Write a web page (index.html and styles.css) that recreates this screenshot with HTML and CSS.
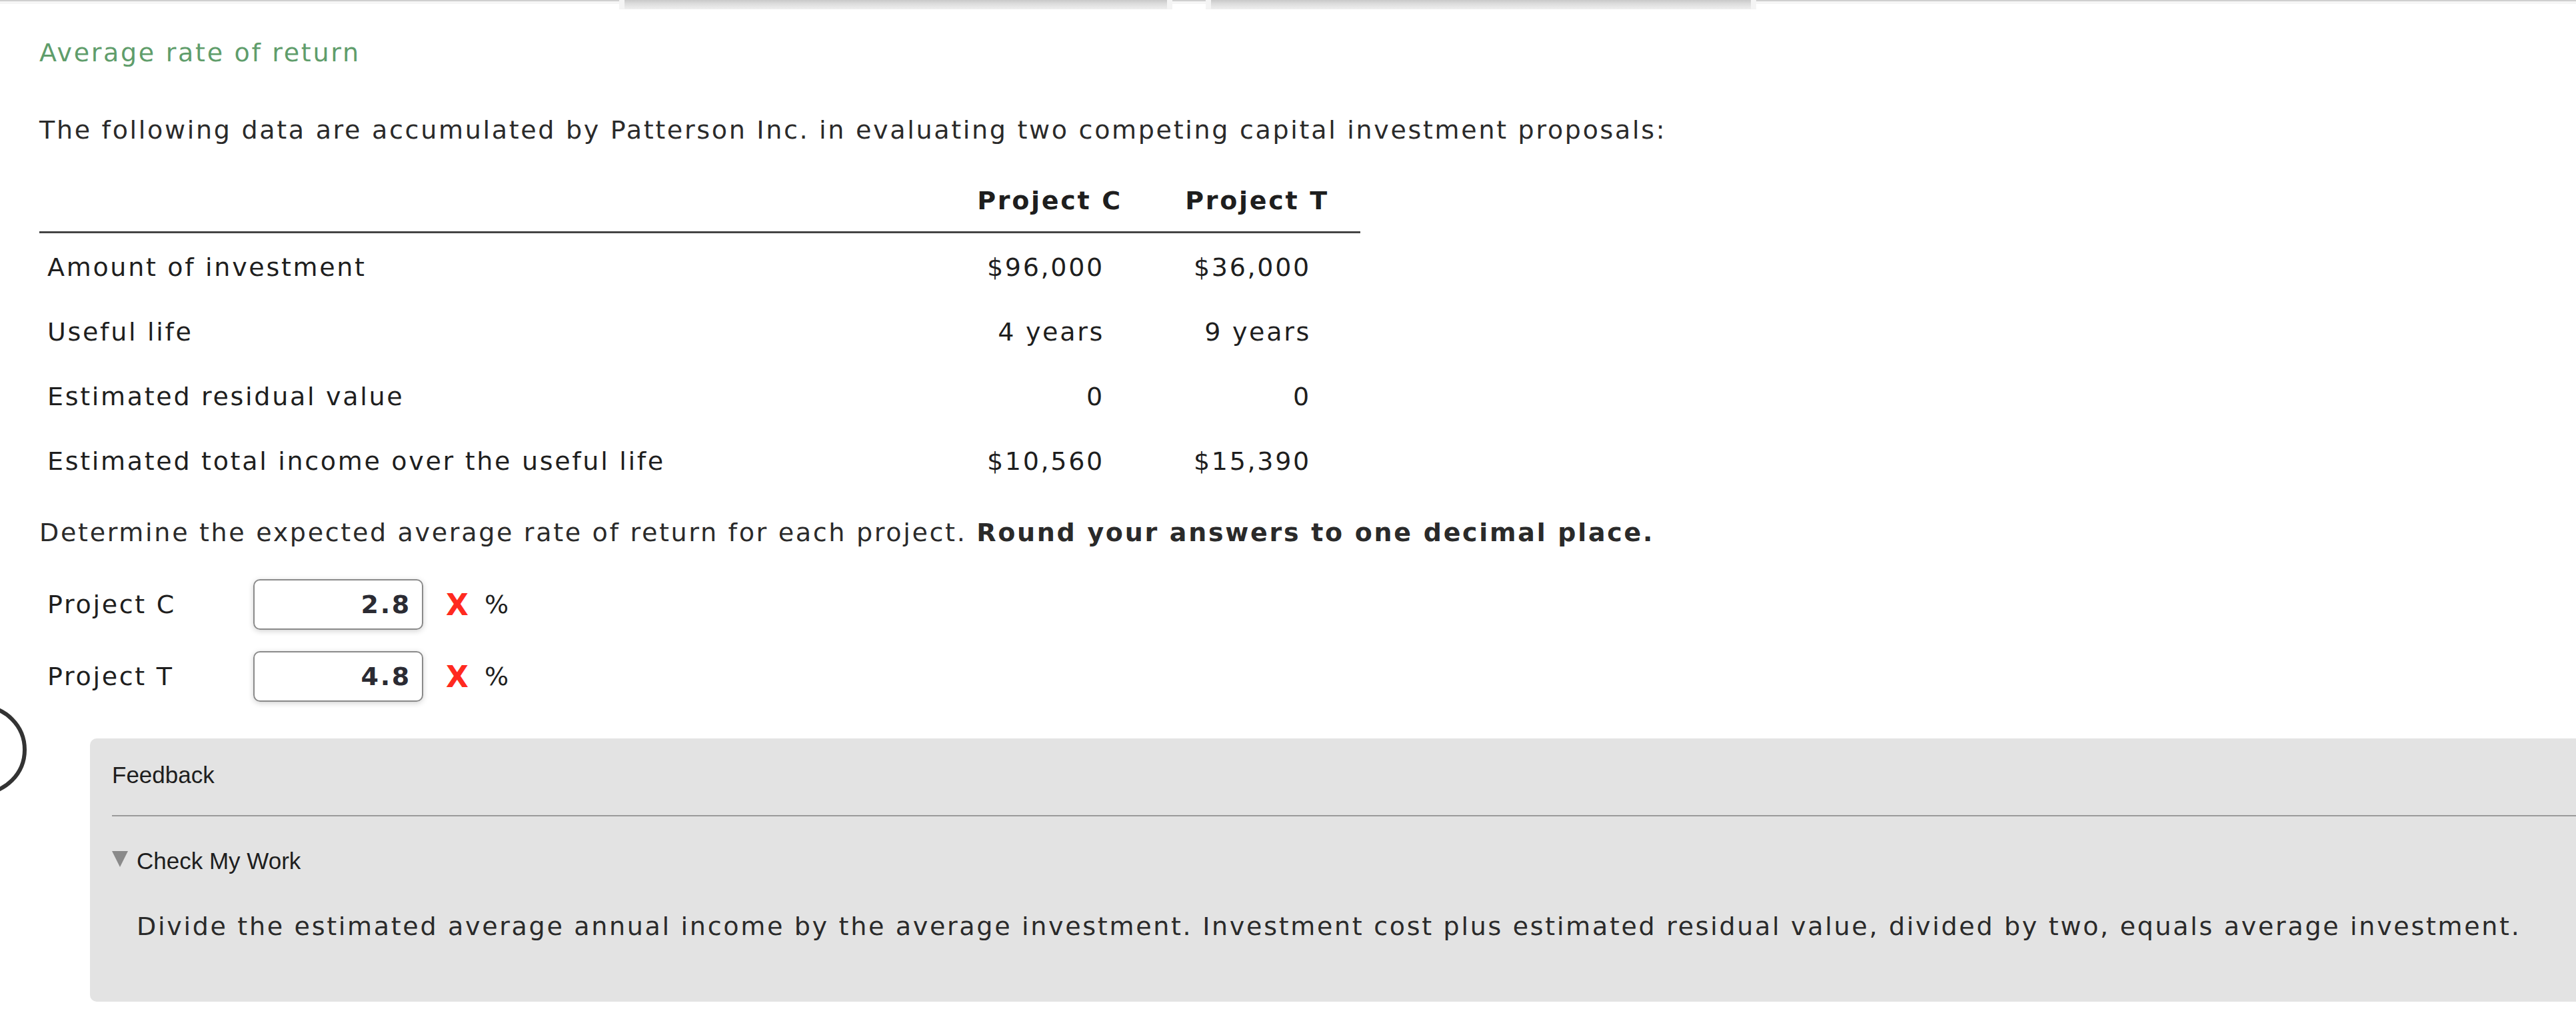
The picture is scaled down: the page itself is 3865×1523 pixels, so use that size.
FILE: index.html
```html
<!DOCTYPE html>
<html lang="en">
<head>
<meta charset="utf-8">
<title>Average rate of return</title>
<link rel="stylesheet" href="styles.css">
</head>
<body>
<div class="topbar">
  <div class="tab tab-one"></div>
  <div class="tab tab-two"></div>
</div>
<div class="side-circle"></div>
<main class="content">
  <h1 class="title">Average rate of return</h1>
  <p class="intro">The following data are accumulated by Patterson Inc. in evaluating two competing capital investment proposals:</p>
  <div class="data-table">
    <div class="th"></div>
    <div class="th">Project C</div>
    <div class="th">Project T</div>
    <div class="td label">Amount of investment</div>
    <div class="td num">$96,000</div>
    <div class="td num">$36,000</div>
    <div class="td label">Useful life</div>
    <div class="td num">4 years</div>
    <div class="td num">9 years</div>
    <div class="td label">Estimated residual value</div>
    <div class="td num">0</div>
    <div class="td num">0</div>
    <div class="td label">Estimated total income over the useful life</div>
    <div class="td num">$10,560</div>
    <div class="td num">$15,390</div>
  </div>
  <p class="question">Determine the expected average rate of return for each project. <strong>Round your answers to one decimal place.</strong></p>
  <div class="answers">
    <div class="answer-row">
      <span class="answer-label">Project C</span>
      <span class="answer-box">2.8</span>
      <span class="wrong">X</span>
      <span class="unit">%</span>
    </div>
    <div class="answer-row">
      <span class="answer-label">Project T</span>
      <span class="answer-box">4.8</span>
      <span class="wrong">X</span>
      <span class="unit">%</span>
    </div>
  </div>
  <section class="feedback">
    <div class="fb-title">Feedback</div>
    <div class="fb-rule"></div>
    <div class="fb-toggle"><span class="tri"></span>Check My Work</div>
    <p class="fb-text">Divide the estimated average annual income by the average investment. Investment cost plus estimated residual value, divided by two, equals average investment.</p>
  </section>
</main>
</body>
</html>
```
FILE: styles.css
```css
html, body {
  margin: 0;
  padding: 0;
  background: #ffffff;
  overflow: hidden;
}
body {
  font-family: "DejaVu Sans", Verdana, sans-serif;
  font-size: 38px;
  letter-spacing: 2.7px;
  color: #2a2a2a;
  position: relative;
  min-height: 1523px;
}
.topbar {
  height: 18px;
  border-top: 2px solid #cfcfcf;
  box-shadow: inset 0 4px 0 #f6f6f6;
  display: flex;
  box-sizing: border-box;
}
.tab {
  height: 14px;
  background: linear-gradient(#c9c9c9, #dcdcdc 40%, #efefef);
  border-left: 8px solid #f4f4f4;
  border-right: 8px solid #f4f4f4;
  margin-top: -2px;
}
.tab-one { margin-left: 929px; width: 814px; }
.tab-two { margin-left: 50px; width: 810px; }
.side-circle {
  position: absolute;
  left: -96px;
  top: 1057px;
  width: 124px;
  height: 124px;
  border: 6px solid #333;
  border-radius: 50%;
}
.content {
  padding-left: 59px;
}
.title {
  margin: 38px 0 0;
  font-size: 38px;
  line-height: 46px;
  font-weight: normal;
  color: #5f9d6b;
}
.intro {
  margin: 70px 0 0;
  line-height: 46px;
}
.data-table {
  margin-top: 37px;
  width: 1982px;
  display: grid;
  grid-template-columns: 1360px 312px 310px;
  color: #1e1e1e;
}
.th {
  height: 92px;
  display: flex;
  align-items: center;
  justify-content: center;
  font-weight: bold;
  border-bottom: 3px solid #444;
}
.td {
  height: 97px;
  display: flex;
  align-items: center;
  padding-top: 4px;
  box-sizing: border-box;
}
.label { padding-left: 12px; }
.num {
  justify-content: flex-end;
  padding-right: 74px;
}
.question {
  margin: 38px 0 0;
  line-height: 46px;
}
.answers {
  margin-top: 31px;
}
.answer-row {
  height: 108px;
  display: flex;
  align-items: center;
  color: #1e1e1e;
}
.answer-label {
  width: 309px;
  padding-left: 12px;
}
.answer-box {
  width: 255px;
  height: 76px;
  box-sizing: border-box;
  border: 2px solid #8a8a8a;
  border-radius: 10px;
  box-shadow: 0 2px 8px rgba(0, 0, 0, 0.18);
  display: flex;
  align-items: center;
  justify-content: flex-end;
  padding-right: 16px;
  font-weight: bold;
  color: #2b2b33;
}
.wrong {
  margin-left: 34px;
  font-size: 44px;
  letter-spacing: 0;
  color: #ff2a1f;
  font-weight: bold;
}
.unit {
  margin-left: 24px;
}
.feedback {
  margin: 39px -40px 0 76px;
  background: #e3e3e3;
  border-radius: 10px;
  padding: 34px 0 90px 33px;
  box-sizing: border-box;
  height: 395px;
}
.fb-title, .fb-toggle {
  font-family: "Liberation Sans", Arial, sans-serif;
  font-size: 35px;
  letter-spacing: 0;
  line-height: 42px;
  color: #1e1e1e;
}
.fb-rule {
  margin-top: 39px;
  height: 2px;
  background: #9a9a9a;
}
.fb-toggle {
  margin-top: 46px;
  display: flex;
  align-items: center;
}
.tri {
  width: 0;
  height: 0;
  border-left: 12px solid transparent;
  border-right: 12px solid transparent;
  border-top: 24px solid #8a8a8a;
  margin-right: 13px;
  margin-top: -6px;
}
.fb-text {
  margin: 54px 0 0 37px;
  line-height: 46px;
  color: #2a2a2a;
}
```
